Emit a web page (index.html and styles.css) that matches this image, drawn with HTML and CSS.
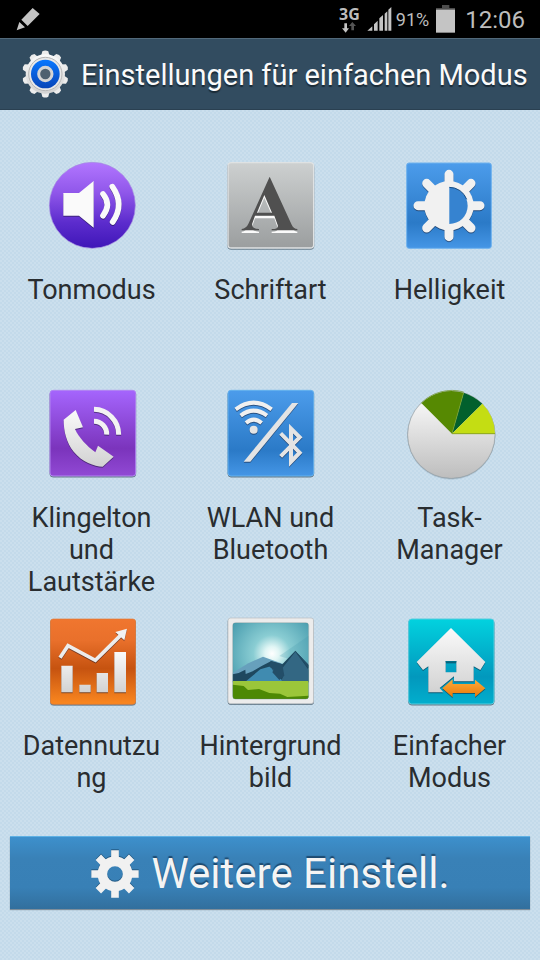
FILE: index.html
```html
<!DOCTYPE html>
<html lang="de">
<head>
<meta charset="utf-8">
<meta name="viewport" content="width=device-width, initial-scale=1">
<title>Einstellungen für einfachen Modus</title>
<link rel="stylesheet" href="styles.css">
</head>
<body>
<div class="statusbar">
  <svg class="pen" viewBox="48 21 72 72" aria-hidden="true"><path fill="#c4c4c4" d="M98 24 119 42 83 78 64 59ZM58 66 75 82 50 91Z"/></svg>
  <div class="status-right">
    <div class="network">
      <span class="network-type">3G</span>
      <svg class="arrows" viewBox="0 0 42 33" aria-hidden="true"><path fill="#c4c4c4" d="M7 4h8v15h6L11 32 0 19h7Z"/><path fill="#555" d="M28 25h8V12h6L31 0 21 12h7Z"/></svg>
    </div>
    <svg class="signal" viewBox="295 21 75 72" aria-hidden="true"><path fill="#c4c4c4" d="M296 92 311 79V92ZM316 92V73L327 62V92ZM332 92V55L343 45V92ZM348 92V41L356 34V92ZM359 92V29L368 21V92Z"/></svg>
    <span class="percent">91%</span>
    <svg class="battery" viewBox="0 0 57 84" aria-hidden="true"><path fill="#4c4c4c" d="M18 0h22v9h17v7H0V9h18Z"/><path fill="#c4c4c4" d="M0 14h57v69H0Z"/></svg>
    <span class="clock">12:06</span>
  </div>
</div>

<header class="header">
  <svg class="app-icon" viewBox="60 144 150 150" aria-hidden="true">
    <defs>
      <linearGradient id="silver" x1="0" y1="0" x2="0" y2="1"><stop offset="0" stop-color="#fafafa"/><stop offset="1" stop-color="#d2d2d2"/></linearGradient>
      <linearGradient id="blueRing" x1="0" y1="0" x2="0" y2="1"><stop offset="0" stop-color="#0a78ff"/><stop offset="1" stop-color="#0745b8"/></linearGradient>
      <path id="tooth" d="M122 170 127 151Q136 146 145 151L150 170Z"/>
    </defs>
    <g fill="#ececec">
      <use href="#tooth"/><use href="#tooth" transform="rotate(36 136 219)"/><use href="#tooth" transform="rotate(72 136 219)"/><use href="#tooth" transform="rotate(108 136 219)"/><use href="#tooth" transform="rotate(144 136 219)"/><use href="#tooth" transform="rotate(180 136 219)"/><use href="#tooth" transform="rotate(216 136 219)"/><use href="#tooth" transform="rotate(252 136 219)"/><use href="#tooth" transform="rotate(288 136 219)"/><use href="#tooth" transform="rotate(324 136 219)"/>
    </g>
    <circle cx="136" cy="219" r="59" fill="url(#silver)"/>
    <circle cx="136" cy="219" r="50" fill="#e8e8e8" stroke="#b5b5b5" stroke-width="3"/>
    <circle cx="136" cy="219" r="43" fill="url(#blueRing)"/>
    <circle cx="136" cy="219" r="20" fill="#4f6170" stroke="#d4d4d4" stroke-width="9"/>
  </svg>
  <h1 class="title">Einstellungen für einfachen Modus</h1>
</header>

<main class="content">
  <div class="grid">
    <button class="tile" type="button">
      <svg class="tile-icon" viewBox="69 24 288 288" aria-hidden="true">
        <defs><linearGradient id="tone" x1="0" y1="0" x2="0" y2="1"><stop offset="0" stop-color="#b276ff"/><stop offset=".35" stop-color="#9057ea"/><stop offset=".7" stop-color="#5c2ccd"/><stop offset="1" stop-color="#3f16b8"/></linearGradient></defs>
        <circle cx="214" cy="166" r="129" fill="url(#tone)" stroke="#a48ce0" stroke-width="2"/>
        <g class="emboss"><path fill="#fafafa" d="M127 129H174L218 93V233L174 197H127Z"/><path fill="none" stroke="#fafafa" stroke-width="17" stroke-linecap="round" d="M246 132Q272 163 246 197M274 110Q312 164 275 216"/></g>
      </svg>
      <span class="label">Tonmodus</span>
    </button>
    <button class="tile" type="button">
      <svg class="tile-icon" viewBox="67 24 288 288" aria-hidden="true">
        <defs><linearGradient id="grey" x1="0" y1="0" x2="0" y2="1"><stop offset="0" stop-color="#cdd0d0"/><stop offset="1" stop-color="#9b9e9f"/></linearGradient>
        <path id="letterform" fill-rule="evenodd" d="M207 80 273 224Q278 236 290 237V241H213V237Q235 237 231 225L221 197H163L155 220Q151 236 175 237V241H123V237Q137 236 144 220ZM191 135 169 188H214Z"/></defs>
        <rect class="shadow" x="82" y="38" width="257" height="256" rx="10" fill="url(#grey)" stroke="#dfe2e3" stroke-width="4"/>
        <use href="#letterform" fill="#fafafa" y="8"/><use href="#letterform" fill="#505050"/>
      </svg>
      <span class="label">Schriftart</span>
    </button>
    <button class="tile" type="button">
      <svg class="tile-icon" viewBox="64 24 288 288" aria-hidden="true">
        <defs><linearGradient id="blue" x1="0" y1="0" x2="0" y2="1"><stop offset="0" stop-color="#4c9ceb"/><stop offset=".7" stop-color="#2b7ac7"/><stop offset="1" stop-color="#4596e6"/></linearGradient></defs>
        <rect x="78" y="39" width="254" height="256" rx="7" fill="url(#blue)" stroke="#6fb2ee" stroke-width="3"/>
        <g class="emboss"><path stroke="#f1f1f1" stroke-width="27" stroke-linecap="round" d="M205 73V260M112 167H298M138 100 271 234M271 100 138 234"/><path fill="#f1f1f1" d="M205 93a74 74 0 0 1 0 148a74 74 0 0 1 0-148Z"/></g>
        <path fill="#3683d0" d="M206 112V222A55 55 0 0 0 206 112Z"/><path fill="none" stroke="#174c83" stroke-width="3" d="M206 112A55 55 0 0 1 258 148"/>
      </svg>
      <span class="label">Helligkeit</span>
    </button>
    <button class="tile" type="button">
      <svg class="tile-icon" viewBox="39 18 288 288" aria-hidden="true">
        <defs><linearGradient id="violet" x1="0" y1="0" x2="0" y2="1"><stop offset="0" stop-color="#a565fd"/><stop offset=".68" stop-color="#7b34bc"/><stop offset="1" stop-color="#9149d4"/></linearGradient></defs>
        <rect class="shadow" x="57" y="31" width="257" height="257" rx="9" fill="url(#violet)" stroke="#b286f2" stroke-width="3"/>
        <g class="emboss"><path fill="url(#silver)" d="M98 119 134 90 156 142 132 147C143 172 167 198 193 217L201 197 248 230 215 260C190 259 153 246 128 215C106 187 98 153 98 119Z"/><path fill="none" stroke="#f3f3f3" stroke-width="15" d="M189 88A75 75 0 0 1 263 164M189 124A38 38 0 0 1 227 164"/></g>
      </svg>
      <span class="label">Klingelton und Lautstärke</span>
    </button>
    <button class="tile" type="button">
      <svg class="tile-icon" viewBox="37 18 288 288" aria-hidden="true">
        <rect class="shadow" x="52" y="31" width="257" height="257" rx="9" fill="url(#blue)" stroke="#65b2ee" stroke-width="3"/>
        <g class="emboss"><path fill="none" stroke="#f0f0f0" stroke-width="12" d="M75 88Q129 48 183 88M90 107Q129 77 169 107M106 129Q129 109 153 129"/><circle cx="129" cy="149" r="12" fill="#e4e4e4"/><path fill="#e4e4e4" d="M244 69H263L119 245H99Z"/><path fill="none" stroke="#e4e4e4" stroke-width="12" d="M210 160 267 218 241 245V146L267 172 210 229"/></g>
      </svg>
      <span class="label">WLAN und Bluetooth</span>
    </button>
    <button class="tile" type="button">
      <svg class="tile-icon" viewBox="34 18 288 288" aria-hidden="true">
        <defs><linearGradient id="pie" x1="0" y1="0" x2="0" y2="1"><stop offset="0" stop-color="#fff"/><stop offset="1" stop-color="#bdbdbd"/></linearGradient></defs>
        <circle class="soft-shadow" cx="182" cy="164" r="131" fill="url(#pie)" stroke="#a3abad" stroke-width="2"/>
        <path fill="#568902" d="M184 161 92 69A131 131 0 0 1 219 38Z"/><path fill="#02602d" d="M184 161 219 38Q250 48 275 71Z"/><path fill="#c4dd13" d="M184 161 275 71Q312 108 313 161Z"/><path fill="none" stroke="#8ba51b" stroke-width="3" d="M184 161H313"/><path fill="none" stroke="#87a85c" stroke-width="3" d="M92 69A131 131 0 0 1 219 36"/><path stroke="#83a72c" stroke-width="2" d="M184 161 219 38"/>
      </svg>
      <span class="label">Task-Manager</span>
    </button>
    <button class="tile" type="button">
      <svg class="tile-icon" viewBox="39 27 288 288" aria-hidden="true">
        <defs><linearGradient id="orange" x1="0" y1="0" x2="0" y2="1"><stop offset="0" stop-color="#f0762f"/><stop offset=".25" stop-color="#e9702b"/><stop offset=".58" stop-color="#c65310"/><stop offset="1" stop-color="#fb8820"/></linearGradient></defs>
        <rect class="shadow" x="58" y="42" width="256" height="256" rx="9" fill="url(#orange)" stroke="#e37b38" stroke-width="2"/>
        <g class="emboss"><path fill="url(#silver)" d="M91 182H125V262H91ZM145 239H179V262H145ZM197 204H231V262H197ZM250 141H285V262H250Z"/><path fill="none" stroke="#ececec" stroke-width="11" d="M87 158 111 122 193 166 271 89"/><path fill="#f2f2f2" d="M288 71 280 106 253 81Z"/></g>
      </svg>
      <span class="label">Datennutzung</span>
    </button>
    <button class="tile" type="button">
      <svg class="tile-icon" viewBox="37 27 288 288" aria-hidden="true">
        <defs><radialGradient id="sky" gradientUnits="userSpaceOnUse" cx="184" cy="146" r="140"><stop offset="0" stop-color="#fff"/><stop offset=".15" stop-color="#e1f6f5"/><stop offset=".4" stop-color="#8acdd3"/><stop offset="1" stop-color="#4da0b1"/></radialGradient><clipPath id="photo"><rect x="66" y="53" width="228" height="229" rx="9"/></clipPath></defs>
        <rect class="shadow" x="52" y="39" width="257" height="257" rx="8" fill="#ececec" stroke="#b8bdc0" stroke-width="2"/>
        <g clip-path="url(#photo)">
          <path fill="url(#sky)" d="M66 53H294V282H66Z"/><path fill="#4297ad" opacity=".25" d="M206 153 294 92V180Z"/>
          <path fill="#67a0bc" d="M66 203 113 175 157 155 218 177 225 232H66Z"/>
          <path fill="#1e485f" d="M66 208 84 204 104 194 105 207 126 199 153 183 182 168 215 178 254 137 294 180V232H66Z"/>
          <path fill="#408bb0" d="M104 230 149 193 180 184 188 198 202 214 222 233Z"/><path fill="#336783" d="M180 169 216 188 254 140 294 195V232H211L219 209 207 214 188 204Z"/><path fill="#234e68" d="M180 169 215 178 221 212 206 225 185 202 189 194 176 185ZM254 138 294 180V191Z"/>
          <path fill="#9bc63a" d="M66 228H294V282H66Z"/><path fill="#4d8904" d="M66 239 99 243 112 255 145 252 176 264 208 266 230 276 294 272V284H66Z"/>
        </g>
        <rect x="66" y="53" width="228" height="229" rx="9" fill="none" stroke="#587f80" stroke-opacity=".5" stroke-width="2"/>
      </svg>
      <span class="label">Hintergrundbild</span>
    </button>
    <button class="tile" type="button">
      <svg class="tile-icon" viewBox="34 27 288 288" aria-hidden="true">
        <defs><linearGradient id="cyan" x1="0" y1="0" x2="0" y2="1"><stop offset="0" stop-color="#02d2df"/><stop offset=".68" stop-color="#0298bd"/><stop offset="1" stop-color="#02aecd"/></linearGradient><linearGradient id="amber" x1="0" y1="0" x2="0" y2="1"><stop offset="0" stop-color="#ffac3a"/><stop offset="1" stop-color="#e97808"/></linearGradient></defs>
        <rect class="shadow" x="54" y="42" width="256" height="255" rx="9" fill="url(#cyan)" stroke="#59ccdf" stroke-width="3"/>
        <g class="emboss"><path fill="url(#silver)" fill-rule="evenodd" d="M181 69 284 171 269 195 249 184V229H190V214L147 249 158 262H113V184L97 195 78 171ZM165 168V202H197V168Z"/><path fill="none" stroke="#04718a" stroke-width="4" d="M165 170H197"/></g>
        <path class="emboss" fill="url(#amber)" d="M155 250 186 223V237H253V224L284 250 253 276V264H186V277Z"/>
      </svg>
      <span class="label">Einfacher Modus</span>
    </button>
  </div>

  <button class="more" type="button">
    <svg class="more-icon" viewBox="270 68 150 150" aria-hidden="true">
      <g fill="none" stroke="#f1f1f1"><circle cx="345" cy="143" r="38" stroke-width="29"/><path stroke-width="23" d="M345 72V104M345 182V214M274 143H306M384 143H416M295 93 317 115M373 171 395 193M395 93 373 115M317 171 295 193"/></g>
    </svg>
    <span>Weitere Einstell.</span>
  </button>
</main>
</body>
</html>
```
FILE: styles.css
```css
* { box-sizing: border-box; }

body {
  margin: 0;
  min-height: 100vh;
  font-family: Roboto, "Liberation Sans", sans-serif;
  color: #292d30;
  background: repeating-conic-gradient(#c3daea 0 25%, #cbdfed 0 50%) 0 0 / 4px 4px;
}

button {
  border: 0;
  margin: 0;
  font: inherit;
  color: inherit;
  background: none;
}

svg { display: block; flex: none; }

.statusbar {
  display: flex;
  justify-content: space-between;
  height: 38px;
  padding: 0 15px 0 16px;
  background: #000;
  color: #bdbdbd;
}

.pen { width: 24px; height: 24px; margin-top: 7px; }

.status-right { display: flex; align-items: center; }

.network {
  display: flex;
  flex-direction: column;
  align-items: center;
  margin-right: 7px;
}

.network-type {
  font: bold 16px/16px "Noto Sans", sans-serif;
}

.arrows { width: 14px; height: 11px; }

.signal { width: 25px; height: 24px; margin-right: 4px; }

.percent { font-size: 18px; line-height: 24px; padding-top: 2px; margin-right: 7px; }

.battery { width: 19px; height: 28px; margin-right: 10px; }

.clock { font-size: 24px; line-height: 32px; padding-top: 2px; }

.header {
  display: flex;
  align-items: center;
  gap: 11px;
  height: 72px;
  padding: 0 12px 0 20px;
  background: #324c60;
  border-top: 1px solid #52697a;
  border-bottom: 1px solid #2a4051;
}

.app-icon { width: 50px; height: 50px; }

.title {
  margin: 0;
  padding-top: 2px;
  font-size: 29px;
  line-height: 36px;
  font-weight: 400;
  white-space: nowrap;
  color: #fafafa;
  text-shadow: 0 2px 1px #1a2a36;
}

.content { padding-top: 42px; }

.grid {
  display: grid;
  grid-template-columns: repeat(3, 1fr);
  grid-auto-rows: minmax(228px, auto);
  padding: 0 1px 0 2px;
}

.tile {
  display: flex;
  flex-direction: column;
  align-items: center;
  gap: 20px;
  padding: 6px 16px 0;
}

.tile-icon { width: 96px; height: 96px; }

.label {
  max-width: 146px;
  font-size: 27px;
  line-height: 32px;
  overflow-wrap: anywhere;
}

.shadow { filter: drop-shadow(0 3px 2px rgba(40, 60, 75, 0.6)); }

.soft-shadow { filter: drop-shadow(0 1px 2px rgba(40, 60, 75, 0.5)); }

.emboss { filter: drop-shadow(0 3px 1px rgba(20, 20, 40, 0.5)); }

.more {
  display: flex;
  align-items: center;
  justify-content: center;
  gap: 11px;
  width: calc(100% - 20px);
  height: 73px;
  margin: 0 10px;
  padding: 2px 0 0;
  font-size: 42px;
  line-height: 50px;
  white-space: nowrap;
  color: #f4f4f4;
  text-shadow: 0 -2px 1px #1d4a70;
  background: linear-gradient(#3d90cc, #3981b7 30%, #3880b6 70%, #326f9d);
  border-top: 1px solid #5fb1e4;
  box-shadow: 0 1px 1px #7e8e9b;
}

.more-icon {
  width: 50px;
  height: 50px;
  filter: drop-shadow(0 -1px 0 #245a84);
}
```
